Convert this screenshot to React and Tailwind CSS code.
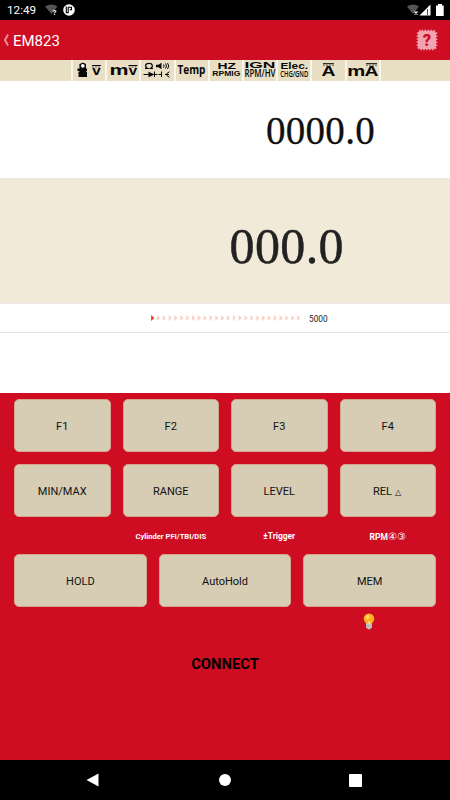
const FUNCTION_KEYS = ['F1', 'F2', 'F3', 'F4']
const MODE_KEYS = ['MIN/MAX', 'RANGE', 'LEVEL']
const HOLD_KEYS = ['HOLD', 'AutoHold', 'MEM']

function Key({ children }) {
  return (
    <button className="h-[53px] w-full rounded-[5px] border border-[#d4a58c] bg-[#d6cdb4] pt-[3px] text-[11px] text-[#111]">
      {children}
    </button>
  )
}

/* Text squeezed to an exact width inside a mode icon */
function Fit({ x, y, w, size, font = 'Liberation Sans', weight = 700, children }) {
  return (
    <text
      x={x}
      y={y}
      textLength={w}
      lengthAdjust="spacingAndGlyphs"
      fontSize={size}
      fontWeight={weight}
      fontFamily={`"${font}", sans-serif`}
      fill="#080808"
    >
      {children}
    </text>
  )
}

function Overline({ x, y, w }) {
  return (
    <g stroke="#080808" strokeWidth="1">
      <path d={`M${x} ${y}h${w}`} />
      <path d={`M${x} ${y + 1.5}h${w}`} strokeDasharray="2 1" strokeWidth=".6" />
    </g>
  )
}

const MODES = [
  {
    id: 'probe',
    icon: (
      <>
        <path d="M5.500 8.500h2V4h6.500v4.500h1v2.500h-1v.8h1V17H6.500v-5.200h1V11h-2z" fill="#080808" />
        <circle cx="10.800" cy="5.800" r="2.500" fill="#fff" stroke="#080808" strokeWidth="1.200" />
        <Overline x={20} y={5.5} w={9} />
        <Fit x={20.3} y={15.500} w={8.4} size={12}>v</Fit>
      </>
    ),
  },
  {
    id: 'mv',
    icon: (
      <>
        <Fit x={3.500} y={15.500} w={19} size={15}>m</Fit>
        <Overline x={22.500} y={5.5} w={9} />
        <Fit x={22.800} y={15.500} w={8.4} size={12}>v</Fit>
      </>
    ),
  },
  {
    id: 'ohm',
    icon: (
      <>
        <path d="M5 8.300h2.300C4.500 6.700 5.200 3.400 9 3.400s4.500 3.300 1.700 4.900H13" fill="none" stroke="#080808" strokeWidth="1.300" />
        <path d="M16 4.800h2.500l3-2v6.500l-3-2H16z" fill="#080808" />
        <g fill="none" stroke="#080808" strokeWidth="1">
          <path d="M23.500 4.500q1.300 1.600 0 3.200M25.500 3.500q2 2.500 0 5M27.500 3q2.500 3 0 6" />
          <path d="M3.500 14.500h14M14.500 11.500v5.600M21.500 11.500v5.600M18.500 14.500h3M25 14.500h4M29.500 11.800q-6 2.700 0 5.400" />
        </g>
        <path d="M8.500 11.700l6 2.800-6 2.800z" fill="#080808" />
      </>
    ),
  },
  { id: 'temp', icon: <Fit x={2.500} y={14.300} w={28} size={12.500} font="Open Sans">Temp</Fit> },
  {
    id: 'hz',
    icon: (
      <>
        <Fit x={8.500} y={8.700} w={18.500} size={8.500}>HZ</Fit>
        <Fit x={3.300} y={16.200} w={28} size={8}>RPMIG</Fit>
      </>
    ),
  },
  {
    id: 'ign',
    icon: (
      <>
        <Fit x={1.500} y={8.500} w={31} size={9}>IGN</Fit>
        <Fit x={1.500} y={17.500} w={31} size={10} font="Open Sans" weight={600}>RPM/HV</Fit>
      </>
    ),
  },
  {
    id: 'elec',
    icon: (
      <>
        <Fit x={3.500} y={8.700} w={27.500} size={9}>Elec.</Fit>
        <Fit x={3.300} y={17} w={28} size={8.500} font="Open Sans" weight={600}>CHG/GND</Fit>
      </>
    ),
  },
  {
    id: 'amp',
    icon: (
      <>
        <Overline x={12} y={3.7} w={11} />
        <Fit x={10.500} y={16.300} w={14} size={14}>A</Fit>
      </>
    ),
  },
  {
    id: 'milliamp',
    icon: (
      <>
        <Fit x={1.300} y={16.300} w={18} size={15.500}>m</Fit>
        <Overline x={20} y={3.7} w={11} />
        <Fit x={18.500} y={16.300} w={14} size={14}>A</Fit>
      </>
    ),
  },
]

function StatusBar() {
  return (
    <div className="flex h-5 items-center justify-between bg-black pl-[7px] pr-[6px] text-white">
      <div className="flex items-center">
        <span className="w-[38px] text-[11.7px] leading-[22px]">12:49</span>
        <svg className="h-3 w-[14px]" viewBox="0 0 14 12">
          <path d="M0 2.500Q6.500-1.500 12.500 2.500L6.500 10z" fill="#555" />
          <text x="7.500" y="11" fontSize="8" fontWeight="700" fill="#fff">?</text>
        </svg>
        <svg className="ml-[4px] h-3 w-3" viewBox="0 0 12 12">
          <circle cx="6" cy="6" r="5.800" fill="#fff" />
          <path d="M3.300 2.500v6.200h1.900V3.200h3.300v2.400H6.800" fill="none" stroke="#000" strokeWidth="1.100" />
        </svg>
      </div>
      <svg className="h-[14px] w-[38px]" viewBox="0 0 38 14">
        <path d="M1 3.500Q7-.5 13 3.500L7 11z" fill="#555" />
        <path d="M8.500 8.500l3 3M11.500 8.500l-3 3" stroke="#fff" strokeWidth="1.200" />
        <path d="M24.500 1.500v11h-11z" fill="#fff" />
        <path d="M21.500 6v6" stroke="#000" strokeWidth=".7" />
        <path d="M30 2.500h2V1h4v1.500h1.700V13H30z" fill="#fff" />
      </svg>
    </div>
  )
}

function Header() {
  return (
    <header className="flex h-10 items-center justify-between bg-[#cf0d22] pl-[3px] pr-3">
      <div className="flex items-center text-white">
        <svg className="mr-1 h-3 w-[6px]" viewBox="0 0 6 12">
          <path d="M5 .5L2 6l3 5.500" fill="none" stroke="#f08a98" strokeWidth="2" />
        </svg>
        <h1 className="pt-px text-[15px] leading-10">EM823</h1>
      </div>
      <svg className="h-[22px] w-[22px]" viewBox="0 0 22 22">
        <rect x="2" y="2" width="18" height="18" rx="3" fill="#f1a4b0" />
        <rect x="1.500" y="1.500" width="19" height="19" rx="4" fill="none" stroke="#f1a4b0" strokeWidth="1.700" strokeDasharray="1.600 1.400" />
        <text x="11" y="17" textAnchor="middle" fontSize="16.500" fontWeight="900" fill="#cf0d22">?</text>
      </svg>
    </header>
  )
}

function BarGraph() {
  return (
    <div className="flex h-[30px] items-center border-y border-t-[#ececec] border-b-[#e4e4e4] bg-white pl-[151px]">
      <svg className="h-[6px] w-[150px]" viewBox="0 0 150 6">
        {Array.from({ length: 26 }, (_, i) => (
          <path key={i} d={`M${i * 5.84 + 0.1} 0l3.200 3-3.200 3z`} fill={i === 0 ? '#f4400c' : '#fcd0c4'} />
        ))}
      </svg>
      <span className="ml-2 pt-[2px] text-[8.3px] leading-none text-[#222]">5000</span>
    </div>
  )
}

function Bulb() {
  return (
    <svg className="h-[17px] w-3" viewBox="0 0 12 17">
      <path d="M6 .5a5.300 5.300 0 0 0-5.300 5.300c0 2.700 2.300 3.700 2.500 5.700h5.600c.2-2 2.500-3 2.500-5.700A5.300 5.300 0 0 0 6 .5z" fill="#fcb022" />
      <ellipse cx="4.500" cy="4" rx="2" ry="2.200" fill="#ffd45c" />
      <path d="M5 8.500h2v2.500H5z" fill="#f3e08a" />
      <path d="M3 10.500h6v3.700L7 16.300H5l-2-2.100z" fill="#c9c9c9" />
      <path d="M3 12.300h6M3.200 14.200h5.600" stroke="#949494" strokeWidth=".5" />
    </svg>
  )
}

export default function App() {
  return (
    <div className="flex h-[800px] w-[450px] flex-col overflow-hidden bg-white font-['Roboto',sans-serif]">
      <StatusBar />
      <Header />

      {/* Measurement modes */}
      <nav className="flex h-[21px] bg-[#e8dfc5] pl-[71px]">
        {MODES.map((mode) => (
          <div key={mode.id} className="w-[34.2px] border-l-2 border-[#f8f5ec] last:w-[36.2px] last:border-r-2">
            <svg className="-ml-px h-[21px] w-[34.3px] overflow-visible" viewBox="0 0 34.3 21">
              {mode.icon}
            </svg>
          </div>
        ))}
      </nav>

      {/* Readouts */}
      <section className="flex h-[97px] items-center justify-end pr-[75px] pt-[4px] font-['Liberation_Serif',serif] text-[39px] tracking-[0.3px] text-[#111] [-webkit-text-stroke:0.3px_#111]">
        0000.0
      </section>
      <section className="flex h-[125px] items-center justify-end bg-[#f2ead8] pr-[106px] pt-[11px] font-['Liberation_Serif',serif] text-[50px] tracking-[0.4px] text-[#222] [-webkit-text-stroke:0.5px_#222]">
        000.0
      </section>
      <BarGraph />
      <div className="h-[60px] bg-white" />

      {/* Keypad */}
      <main className="flex flex-1 flex-col bg-[#cf0d22] px-[14px] pt-[6px]">
        <div className="grid grid-cols-4 gap-x-3 gap-y-3">
          {FUNCTION_KEYS.map((label) => (
            <Key key={label}>{label}</Key>
          ))}
          {MODE_KEYS.map((label) => (
            <Key key={label}>{label}</Key>
          ))}
          <Key>
            REL <span className="mr-[2px] text-[8px]">△</span>
          </Key>
        </div>
        <div className="grid h-[37px] grid-cols-4 items-center gap-x-3 whitespace-nowrap pt-[2px] text-center font-bold text-white">
          <span />
          <span className="text-[7.6px]">Cylinder PFI/TBI/DIS</span>
          <span className="text-[8.4px]">±Trigger</span>
          <span className="text-[8.5px] leading-none">
            RPM<span className="text-[9.500px] font-normal">④③</span>
          </span>
        </div>
        <div className="grid grid-cols-3 gap-x-3">
          {HOLD_KEYS.map((label) => (
            <Key key={label}>{label}</Key>
          ))}
        </div>
        <div className="flex justify-end pr-[61px] pt-[6px]">
          <Bulb />
        </div>
        <button className="mt-[25px] text-[14.8px] font-bold leading-[18px] text-black">CONNECT</button>
      </main>

      {/* System navigation */}
      <footer className="flex h-10 items-center justify-between bg-black pl-[86px] pr-[88px]">
        <svg className="h-[14px] w-[13px]" viewBox="0 0 13 14">
          <path d="M12.500.5v13L.5 7z" fill="#fff" />
        </svg>
        <span className="ml-[2px] h-3 w-3 rounded-full bg-white" />
        <span className="h-[13px] w-[13px] rounded-[1px] bg-white" />
      </footer>
    </div>
  )
}
